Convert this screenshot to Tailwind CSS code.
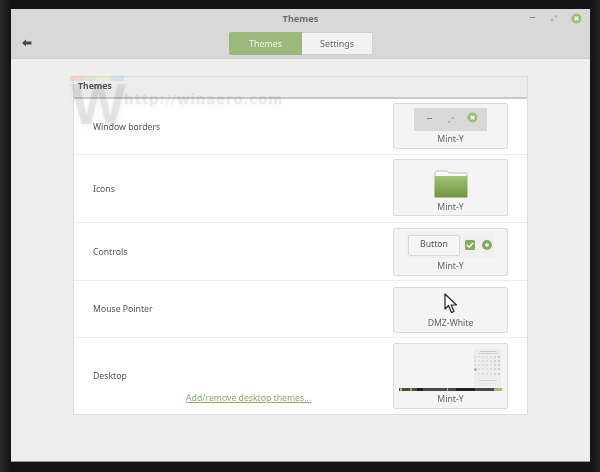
<!DOCTYPE html>
<html><head><meta charset="utf-8"><script src="https://cdn.jsdelivr.net/npm/@tailwindcss/browser@4"></script></head>
<body class="m-0 bg-[#161616]">
<div class="relative w-[600px] h-[472px] overflow-hidden pt-[9px] pl-[11px] font-['Noto_Sans',sans-serif] bg-[linear-gradient(90deg,#2a2a2a_0,#141414_10px,#141414_590px,#222_600px)] blur-[0.4px]">
  <div class="w-[579px] h-[453px] bg-[#eeeeee] flex flex-col border-b border-[#999] rounded-t-[2px]">
    <header class="relative h-[50px] shrink-0 bg-[#d8d8d8] border-b border-[#cfcfcf]">
      <div class="text-center text-[9.2px] font-bold leading-none pt-[5px] text-[#6f6f6f]">Themes</div>
      <div class="absolute left-[11px] top-[30px]">
        <svg width="10" height="8" viewBox="0 0 10 8"><path d="M0 4 L4 0.5 V2.5 H9.5 V5.5 H4 V7.5 Z" fill="#4a4444"/></svg>
      </div>
      <div class="absolute top-[23px] left-[218px] flex h-[23px] text-[8.9px]">
        <div class="w-[73px] bg-[#9ab87a] text-[#f3f6ee] rounded-l-[2px] flex items-center justify-center">Themes</div>
        <div class="w-[71px] bg-[#f2f2f2] text-[#666] border border-[#cfcfcf] border-l-0 rounded-r-[2px] flex items-center justify-center">Settings</div>
      </div>
      <div class="absolute top-[8px] left-[519px] w-[5px] h-[1px] bg-[#888]"></div>
      <svg class="absolute top-[6px] left-[540px]" width="6" height="6" viewBox="0 0 7 7"><path d="M4 0.5H6.5V3ZM3 6.5H0.5V4Z" fill="#888"/><path d="M2 5L5 2" stroke="#bbb" stroke-width="0.6"/></svg>
      <svg class="absolute top-[4px] left-[560px]" width="11" height="11" viewBox="0 0 11 11"><circle cx="5.5" cy="5.5" r="5" fill="#9bbf72"/><path d="M3.7 3.7L7.3 7.3M7.3 3.7L3.7 7.3" stroke="#fff" stroke-width="1.5"/></svg>
    </header>
    <main class="ml-[62px] mt-[17px] w-[455px] h-[339px] flex flex-col bg-white border-x border-b border-[#dcdcdc] text-[8.7px] text-[#555]">
      <div class="h-[23px] shrink-0 bg-[#ededed] border-t border-[#dcdcdc] border-b-2 border-b-[#c9c9c9] px-[4px] flex items-center font-bold text-[#555]">Themes</div>
      <section class="h-[56px] shrink-0 border-b border-[#ececec] flex items-center justify-between px-[19px]">
        <span class="mt-[2px]">Window borders</span>
        <div class="mb-[2px] w-[115px] h-[46px] bg-[#f4f4f4] border border-[#dcdcdc] rounded-[2px] flex flex-col items-center pt-[4px]">
          <div class="relative w-[73px] h-[23px] bg-[#d8d8d8]">
            <div class="absolute left-[13px] top-[10px] w-[5px] h-[1px] bg-[#888]"></div>
            <svg class="absolute left-[34px] top-[9px]" width="6" height="6" viewBox="0 0 7 7"><path d="M4 0.5H6.5V3ZM3 6.5H0.5V4Z" fill="#888"/><path d="M2 5L5 2" stroke="#bbb" stroke-width="0.6"/></svg>
            <svg class="absolute left-[53px] top-[4px]" width="11" height="11" viewBox="0 0 11 11"><circle cx="5.5" cy="5.5" r="5" fill="#9bbf72"/><path d="M3.7 3.7L7.3 7.3M7.3 3.7L3.7 7.3" stroke="#fff" stroke-width="1.5"/></svg>
          </div>
          <span class="mt-[2px] leading-[13px] text-[#666]">Mint-Y</span>
        </div>
      </section>
      <section class="h-[68px] shrink-0 border-b border-[#ececec] flex items-center justify-between px-[19px]">
        <span class="mt-[2px]">Icons</span>
        <div class="mb-[2px] w-[115px] h-[57px] bg-[#f4f4f4] border border-[#dcdcdc] rounded-[2px] flex flex-col items-center pt-[10px]">
          <svg width="34" height="28" viewBox="0 0 34 28"><defs><linearGradient id="f" x1="0" y1="0" x2="0" y2="1"><stop offset="0" stop-color="#a2c274"/><stop offset="1" stop-color="#6f9440"/></linearGradient></defs><path d="M1 7V2.5Q1 1 2.5 1H13L15 3H32Q33 3 33 4V7Z" fill="#fafafa" stroke="#aaa" stroke-width="0.7"/><path d="M0.5 6H33.5V26.5Q33.5 27.5 32.5 27.5H1.5Q0.5 27.5 0.5 26.5Z" fill="url(#f)"/></svg>
          <span class="mt-[3px] leading-[13px] text-[#666]">Mint-Y</span>
        </div>
      </section>
      <section class="h-[58px] shrink-0 border-b border-[#ececec] flex items-center justify-between px-[19px]">
        <span class="mt-[2px]">Controls</span>
        <div class="w-[115px] h-[48px] bg-[#f4f4f4] border border-[#dcdcdc] rounded-[2px] flex flex-col items-center pt-[4px]">
          <div class="w-[87px] h-[25px] bg-[#f0f0f0] flex items-center gap-[5px] pl-[1px]">
            <div class="w-[52px] h-[21px] bg-[#f5f5f5] border border-[#d8d8d8] rounded-[2px] flex items-center justify-center text-[#555]">Button</div>
            <svg width="10" height="10" viewBox="0 0 10 10"><rect width="10" height="10" rx="1.5" fill="#86ab5c"/><path d="M2 5L4.2 7.2L8 3" stroke="#fff" stroke-width="1.6" fill="none"/></svg>
            <svg class="ml-[2px]" width="10" height="10" viewBox="0 0 10 10"><circle cx="5" cy="5" r="5" fill="#86ab5c"/><circle cx="5" cy="5" r="1.8" fill="#fff"/></svg>
          </div>
          <span class="mt-[2px] leading-[13px] text-[#666]">Mint-Y</span>
        </div>
      </section>
      <section class="h-[57px] shrink-0 border-b border-[#ececec] flex items-center justify-between px-[19px]">
        <span class="mt-[2px]">Mouse Pointer</span>
        <div class="mt-[2px] w-[115px] h-[46px] bg-[#f4f4f4] border border-[#dcdcdc] rounded-[2px] flex flex-col items-center pt-[5px]">
          <svg width="14" height="21" viewBox="0 0 14 21"><path d="M1 1V16L4.5 12.5L7.5 19.5L10 18.5L7.2 12H12.5Z" fill="#fff" stroke="#222" stroke-width="1.2" stroke-linejoin="round"/></svg>
          <span class="mt-[3px] leading-[13px] text-[#666]">DMZ-White</span>
        </div>
      </section>
      <section class="relative flex-1 flex items-center justify-between px-[19px]">
        <span class="mt-[2px]">Desktop</span>
        <div class="w-[115px] h-[66px] bg-[#f4f4f4] border border-[#dcdcdc] rounded-[2px] flex flex-col items-center">
          <div class="relative w-[103px] h-[48px] mt-[5px]">
            <div class="absolute right-[1px] top-0 w-[27px] h-[38px] bg-[#ededed] flex flex-col items-center pt-[2px] gap-[1px]">
              <div class="w-[16px] h-[1px] bg-[#c8c8c8]"></div>
              <div class="w-[20px] h-[1px] bg-[#d4d4d4] mb-[1px]"></div>
              <div class="grid grid-cols-7 gap-x-[1.5px] gap-y-[2px]">
                <i class="w-[2px] h-[2px] bg-[#e0e0e0]"></i><i class="w-[2px] h-[2px] bg-[#e0e0e0]"></i><i class="w-[2px] h-[2px] bg-[#e0e0e0]"></i><i class="w-[2px] h-[2px] bg-[#e0e0e0]"></i><i class="w-[2px] h-[2px] bg-[#e0e0e0]"></i><i class="w-[2px] h-[2px] bg-[#d4d4d4]"></i><i class="w-[2px] h-[2px] bg-[#ccc]"></i>
                <i class="w-[2px] h-[2px] bg-[#e0e0e0]"></i><i class="w-[2px] h-[2px] bg-[#e0e0e0]"></i><i class="w-[2px] h-[2px] bg-[#e0e0e0]"></i><i class="w-[2px] h-[2px] bg-[#e0e0e0]"></i><i class="w-[2px] h-[2px] bg-[#e0e0e0]"></i><i class="w-[2px] h-[2px] bg-[#d4d4d4]"></i><i class="w-[2px] h-[2px] bg-[#ccc]"></i>
                <i class="w-[2px] h-[2px] bg-[#e0e0e0]"></i><i class="w-[2px] h-[2px] bg-[#e0e0e0]"></i><i class="w-[2px] h-[2px] bg-[#e0e0e0]"></i><i class="w-[2px] h-[2px] bg-[#e0e0e0]"></i><i class="w-[2px] h-[2px] bg-[#e0e0e0]"></i><i class="w-[2px] h-[2px] bg-[#d4d4d4]"></i><i class="w-[2px] h-[2px] bg-[#ccc]"></i>
                <i class="w-[3px] h-[3px] bg-[#9bbf72] rounded-full"></i><i class="w-[2px] h-[2px] bg-[#e0e0e0]"></i><i class="w-[2px] h-[2px] bg-[#e0e0e0]"></i><i class="w-[2px] h-[2px] bg-[#e0e0e0]"></i><i class="w-[2px] h-[2px] bg-[#e0e0e0]"></i><i class="w-[2px] h-[2px] bg-[#d4d4d4]"></i><i class="w-[2px] h-[2px] bg-[#ccc]"></i>
                <i class="w-[2px] h-[2px] bg-[#e0e0e0]"></i><i class="w-[2px] h-[2px] bg-[#e0e0e0]"></i><i class="w-[2px] h-[2px] bg-[#e0e0e0]"></i><i class="w-[2px] h-[2px] bg-[#e0e0e0]"></i><i class="w-[2px] h-[2px] bg-[#e0e0e0]"></i><i class="w-[2px] h-[2px] bg-[#d4d4d4]"></i><i class="w-[2px] h-[2px] bg-[#ccc]"></i>
              </div>
              <div class="w-[18px] h-[1px] bg-[#d4d4d4] mt-[4px]"></div>
            </div>
            <div class="absolute left-0 bottom-[6px] w-full h-[3px] bg-[#4a4a48] flex">
              <i class="w-[2px] bg-[#9bbf72] ml-[1px]"></i><i class="w-[2px] bg-[#d98a3c] ml-[8px]"></i><i class="w-[6px] bg-[#222] ml-[5px]"></i><i class="w-[2px] bg-[#aaa] ml-[24px]"></i><i class="w-[20px] bg-[#222] ml-[8px]"></i><i class="w-[8px] bg-[#9bbf72] ml-[19px]"></i>
            </div>
          </div>
          <span class="mt-[-4px] leading-[13px] text-[#666]">Mint-Y</span>
        </div>
        <a class="absolute left-[112px] top-[54px] text-[#8bab68] underline">Add/remove desktop themes...</a>
      </section>
    </main>
  </div>
  <div class="absolute left-[70px] top-[76px] w-[54px] h-[5px] flex opacity-40">
    <i class="flex-1 bg-[#f3b7a0]"></i><i class="flex-1 bg-[#c9e0a0]"></i><i class="flex-1 bg-[#f3e2a0]"></i><i class="flex-1 bg-[#a6d4ee]"></i>
  </div>
  <div class="absolute left-[71px] top-[75px] text-[58px] leading-none font-bold text-black/[0.07] font-['Liberation_Sans',sans-serif] blur-[0.5px] [text-shadow:0_2px_6px_rgba(0,0,0,.06)]">W</div>
  <div class="absolute left-[124px] top-[92px] text-[14px] leading-none font-bold tracking-[0.5px] text-black/[0.07] font-['DejaVu_Sans',sans-serif] blur-[0.5px] [text-shadow:0_2px_5px_rgba(0,0,0,.06)]">http://winaero.com</div>
</div>
</body></html>
